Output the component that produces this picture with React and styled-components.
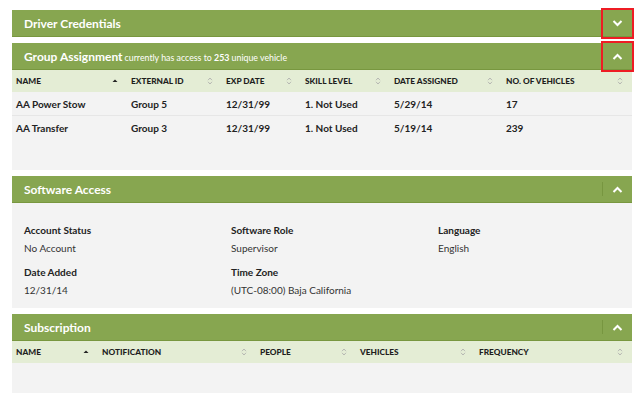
import React from 'react';
import styled, { createGlobalStyle } from 'styled-components';

const GlobalStyle = createGlobalStyle`
  body {
    margin: 0;
    background: #fff;
    font-family: Lato, "Open Sans", sans-serif;
    color: #222;
  }
`;

const Page = styled.div`
  display: flex;
  flex-direction: column;
  gap: 6px;
  padding: 10px 7px 0 12px;
`;

const Panel = styled.section`
  display: flex;
  flex-direction: column;
`;

const Header = styled.div`
  display: flex;
  align-items: center;
  height: 26px;
  background: #87a650;
  border-bottom: 1px solid #78973f;
  color: #fff;
`;

const Title = styled.div`
  flex: 1;
  padding-left: 12px;
  font-size: 12px;
  font-weight: 700;
  white-space: nowrap;
`;

const Note = styled.span`
  font-size: 8.8px;
  font-weight: 400;
  margin-left: 2px;
  b {
    font-weight: 700;
  }
`;

const Toggle = styled.div`
  position: relative;
  width: 30px;
  height: 100%;
  display: flex;
  align-items: center;
  justify-content: center;
  &::before {
    content: '';
    position: absolute;
    left: 0;
    top: 6px;
    bottom: 6px;
    width: 1px;
    background: ${p => (p.$mark ? 'transparent' : '#779640')};
  }
  ${p => p.$mark && `
    &::after {
      content: '';
      position: absolute;
      left: -1px;
      right: -2px;
      top: -2px;
      bottom: -3px;
      border: 2px solid #ee1c24;
    }
  `}
`;

const Grid = styled.div`
  display: grid;
  grid-template-columns: ${p => p.$cols};
`;

const HeadCell = styled.div`
  display: flex;
  align-items: center;
  justify-content: space-between;
  height: 22px;
  padding: 0 9px 0 4px;
  background: #e4edd5;
  font-size: 8.3px;
  font-weight: 900;
  text-transform: uppercase;
  color: #1e1e1e;
`;

const Cell = styled.div`
  display: flex;
  align-items: center;
  height: 23px;
  padding-left: 4px;
  background: #f3f3f3;
  border-bottom: 1px solid ${p => (p.$last ? '#f3f3f3' : '#e6e6e6')};
  font-size: 10px;
  font-weight: 700;
`;

const Filler = styled.div`
  background: #f3f3f3;
  height: ${p => p.$h}px;
`;

const Fields = styled.div`
  display: grid;
  grid-template-columns: 207px 207px 1fr;
  row-gap: 12px;
  padding: 21px 12px 12px;
  background: #f3f3f3;
`;

const Field = styled.div`
  display: flex;
  flex-direction: column;
  gap: 6px;
`;

const Label = styled.div`
  font-size: 10px;
  font-weight: 700;
  color: #222;
`;

const Value = styled.div`
  font-size: 10px;
  color: #333;
`;

const Chevron = ({ up }) => (
  <svg width="11" height="7" viewBox="0 0 11 7">
    <path
      d={up ? 'M1.5 6 L5.5 2 L9.5 6' : 'M1.5 1 L5.5 5 L9.5 1'}
      fill="none"
      stroke="#fff"
      strokeWidth="2"
    />
  </svg>
);

const SortIcon = ({ active }) =>
  active ? (
    <svg width="6" height="6" viewBox="0 0 6 6">
      <path d="M0.5 4 L3 1.5 L5.5 4 Z" fill="#222" />
    </svg>
  ) : (
    <svg width="6" height="8" viewBox="0 0 6 8">
      <path d="M1 3.2 L3 1 L5 3.2" fill="none" stroke="#aaa" strokeWidth="0.8" />
      <path d="M1 4.8 L3 7 L5 4.8" fill="none" stroke="#aaa" strokeWidth="0.8" />
    </svg>
  );

const PanelHeader = ({ title, note, up, mark }) => (
  <Header>
    <Title>
      {title}
      {note}
    </Title>
    <Toggle $mark={mark}>
      <Chevron up={up} />
    </Toggle>
  </Header>
);

const groupCols = ['Name', 'External ID', 'Exp Date', 'Skill Level', 'Date Assigned', 'No. of Vehicles'];
const groupRows = [
  ['AA Power Stow', 'Group 5', '12/31/99', '1. Not Used', '5/29/14', '17'],
  ['AA Transfer', 'Group 3', '12/31/99', '1. Not Used', '5/19/14', '239'],
];
const subCols = ['Name', 'Notification', 'People', 'Vehicles', 'Frequency'];

const fields = [
  ['Account Status', 'No Account'],
  ['Software Role', 'Supervisor'],
  ['Language', 'English'],
  ['Date Added', '12/31/14'],
  ['Time Zone', '(UTC-08:00) Baja California'],
];

export default function App() {
  return (
    <>
      <GlobalStyle />
      <Page>
        <Panel>
          <PanelHeader title="Driver Credentials" mark />
        </Panel>

        <Panel>
          <PanelHeader
            title="Group Assignment"
            up
            mark
            note={
              <Note>
                currently has access to <b>253</b> unique vehicle
              </Note>
            }
          />
          <Grid $cols="115px 95px 79px 89px 112px 1fr">
            {groupCols.map((c, i) => (
              <HeadCell key={c}>
                {c}
                <SortIcon active={i === 0} />
              </HeadCell>
            ))}
            {groupRows.map((row, r) =>
              row.map((v, i) => (
                <Cell key={r + '-' + i} $last={r === groupRows.length - 1}>
                  {v}
                </Cell>
              ))
            )}
          </Grid>
          <Filler $h={30} />
        </Panel>

        <Panel>
          <PanelHeader title="Software Access" up />
          <Fields>
            {fields.map(([l, v]) => (
              <Field key={l}>
                <Label>{l}</Label>
                <Value>{v}</Value>
              </Field>
            ))}
          </Fields>
        </Panel>

        <Panel>
          <PanelHeader title="Subscription" up />
          <Grid $cols="86px 158px 100px 119px 1fr">
            {subCols.map((c, i) => (
              <HeadCell key={c}>
                {c}
                <SortIcon active={i === 0} />
              </HeadCell>
            ))}
          </Grid>
          <Filler $h={30} />
        </Panel>
      </Page>
    </>
  );
}
